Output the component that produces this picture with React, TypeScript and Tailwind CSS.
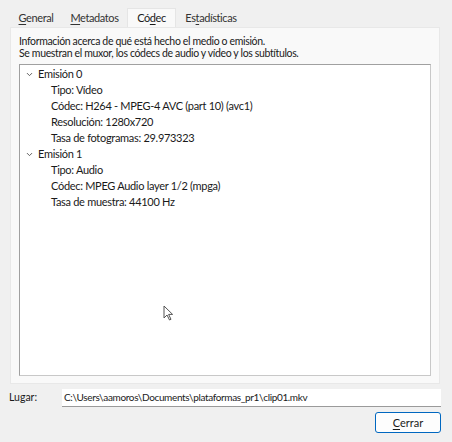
import { ChevronDown } from "lucide-react";

type Stream = {
  title: string;
  props: string[];
};

const streams: Stream[] = [
  {
    title: "Emisión 0",
    props: [
      "Tipo: Vídeo",
      "Códec: H264 - MPEG-4 AVC (part 10) (avc1)",
      "Resolución: 1280x720",
      "Tasa de fotogramas: 29.973323",
    ],
  },
  {
    title: "Emisión 1",
    props: ["Tipo: Audio", "Códec: MPEG Audio layer 1/2 (mpga)", "Tasa de muestra: 44100 Hz"],
  },
];

const tabs = [
  { label: "General", key: "G", rest: "eneral", pre: "", w: "w-[52px]" },
  { label: "Metadatos", key: "M", rest: "etadatos", pre: "", w: "w-[65px]" },
  { label: "Códec", key: "d", rest: "ec", pre: "Có", w: "w-[49px]" },
  { label: "Estadísticas", key: "t", rest: "adísticas", pre: "Es", w: "w-[70px]" },
];

const App = () => {
  return (
    <div
      className="relative w-[452px] h-[442px] bg-[#f0f0f0] text-[11px] tracking-[-0.3px] text-[#1a1a1a] overflow-hidden"
      style={{ fontFamily: 'Lato, "Noto Sans", sans-serif' }}
    >
      <div className="flex flex-col pt-[9px] pl-[10px] pr-[12px]">
        {/* tabs */}
        <div className="flex items-end h-[18px]">
          {tabs.map((t) => {
            const active = t.label === "Códec";
            return (
              <div
                key={t.label}
                className={
                  (active
                    ? "h-[19px] bg-[#f9f9f9] border border-b-0 border-[#e5e5e5] leading-[17px]"
                    : "h-[17px] bg-[#f0f0f0] leading-[16px] text-[#333]") +
                  " text-center text-[11px] tracking-[-0.4px] " +
                  t.w
                }
              >
                {t.pre}
                <span className="underline underline-offset-2">{t.key}</span>
                {t.rest}
              </div>
            );
          })}
        </div>

        {/* panel */}
        <div className="h-[357px] bg-[#f9f9f9] border border-[#e8e8e8] px-[8px] pt-[7px] flex flex-col">
          <p className="leading-[12px] text-[10.5px] tracking-[-0.35px]">
            Información acerca de qué está hecho el medio o emisión.
          </p>
          <p className="leading-[12px] text-[10.5px] tracking-[-0.35px]">
            Se muestran el muxor, los códecs de audio y vídeo y los subtítulos.
          </p>

          <div className="mt-[5px] h-[312px] bg-white border border-[#a0a0a0] border-r-[#c8c8c8] border-b-[#c8c8c8] pt-[1px]">
            {streams.map((s) => (
              <div key={s.title}>
                <div className="flex items-center h-[16px] pl-[5px]">
                  <ChevronDown className="w-[9px] h-[9px] text-[#555]" strokeWidth={2.5} />
                  <span className="ml-[4px]">{s.title}</span>
                </div>
                {s.props.map((p) => (
                  <div key={p} className="h-[16px] leading-[16px] pl-[31px]">
                    {p}
                  </div>
                ))}
              </div>
            ))}
          </div>
        </div>

        {/* location */}
        <div className="flex items-center mt-[5px] -ml-[1px] -mr-[1px] text-[10px] tracking-[-0.35px]">
          <span className="w-[53px] text-[10.5px] tracking-normal">Lugar:</span>
          <div className="flex-1 h-[18px] bg-white border-b border-[#9a9a9a] px-[2px] leading-[17px]">
            C:\Users\aamoros\Documents\plataformas_pr1\clip01.mkv
          </div>
        </div>

        <div className="flex justify-end mt-[5px] -mr-[1px]">
          <button className="w-[66px] h-[21px] bg-[#fdfdfd] border border-[#0067c0] rounded-[3px] leading-[18px] text-[11px] tracking-normal">
            <span className="underline underline-offset-2">C</span>errar
          </button>
        </div>
      </div>

      {/* mouse pointer */}
      <svg
        className="absolute left-[163px] top-[305px]"
        width="11"
        height="16"
        viewBox="0 0 11 16"
      >
        <path
          d="M1 1 L1 13 L4 10 L6.5 15 L8 14.3 L5.6 9.4 L9.6 9.4 Z"
          fill="#fff"
          stroke="#555"
          strokeWidth="1"
          strokeLinejoin="round"
        />
      </svg>
    </div>
  );
};

export default App;
